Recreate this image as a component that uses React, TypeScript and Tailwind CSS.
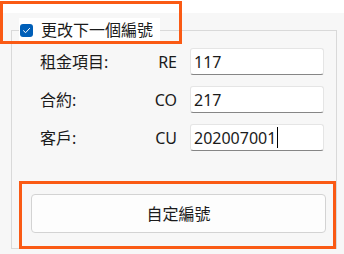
const rows = [
  { label: "租金項目:", code: "RE", value: "117" },
  { label: "合約:", code: "CO", value: "217" },
  { label: "客戶:", code: "CU", value: "202007001", focused: true },
];

export default function App() {
  return (
    <div
      className="relative w-[344px] h-[254px] bg-white overflow-hidden text-[16px] text-[#1b1b1b]"
      style={{ fontFamily: '"Noto Sans", "Noto Sans CJK TC", sans-serif' }}
    >
      <div className="mt-[13px] h-[241px] bg-[#f7f7f7] pt-[5px] pl-[11px]">
        {/* Group box */}
        <fieldset className="w-[326px] h-[231px] border border-[#d9d9d9] pl-[7px] pr-[8px]">
          <legend className="flex items-center h-[24px] bg-white pl-[1px] pr-[7px]">
            <span className="flex items-center justify-center w-[13px] h-[13px] rounded-[3px] bg-[#005fb8]">
              <svg width="9" height="9" viewBox="0 0 9 9" fill="none">
                <path d="M1.5 4.7 L3.6 6.7 L7.6 2.4" stroke="white" strokeWidth="1" strokeLinecap="round" strokeLinejoin="round" />
              </svg>
            </span>
            <span className="ml-[8px] leading-none">更改下一個編號</span>
          </legend>

          <div className="mt-[6px] pl-[21px] grid grid-cols-[100px_50px_134px] gap-y-[11px] items-center">
            {rows.map((r) => (
              <div key={r.code} className="contents">
                <span className="leading-none">{r.label}</span>
                <span className="text-right leading-none pr-[13px]">{r.code}</span>
                <div className="h-[27px] bg-white border border-[#e5e5e5] border-b-[#868686] rounded-[3px] flex items-center pl-[3px]">
                  <span className="leading-none">{r.value}</span>
                  {r.focused && <span className="ml-[1px] w-[1px] h-[21px] bg-black" />}
                </div>
              </div>
            ))}
          </div>

          <button className="mt-[43px] ml-[12px] w-[295px] h-[39px] bg-[#fdfdfd] border border-[#d3d3d3] rounded-[4px] flex items-center justify-center">
            自定編號
          </button>
        </fieldset>
      </div>

      {/* Annotation highlights */}
      <div className="absolute left-0 top-[1px] w-[182px] h-[43px] border-[3px] border-[#fa5a14] pointer-events-none" />
      <div className="absolute left-[19px] top-[181px] w-[317px] h-[68px] border-[3px] border-[#fa5a14] pointer-events-none" />
    </div>
  );
}
